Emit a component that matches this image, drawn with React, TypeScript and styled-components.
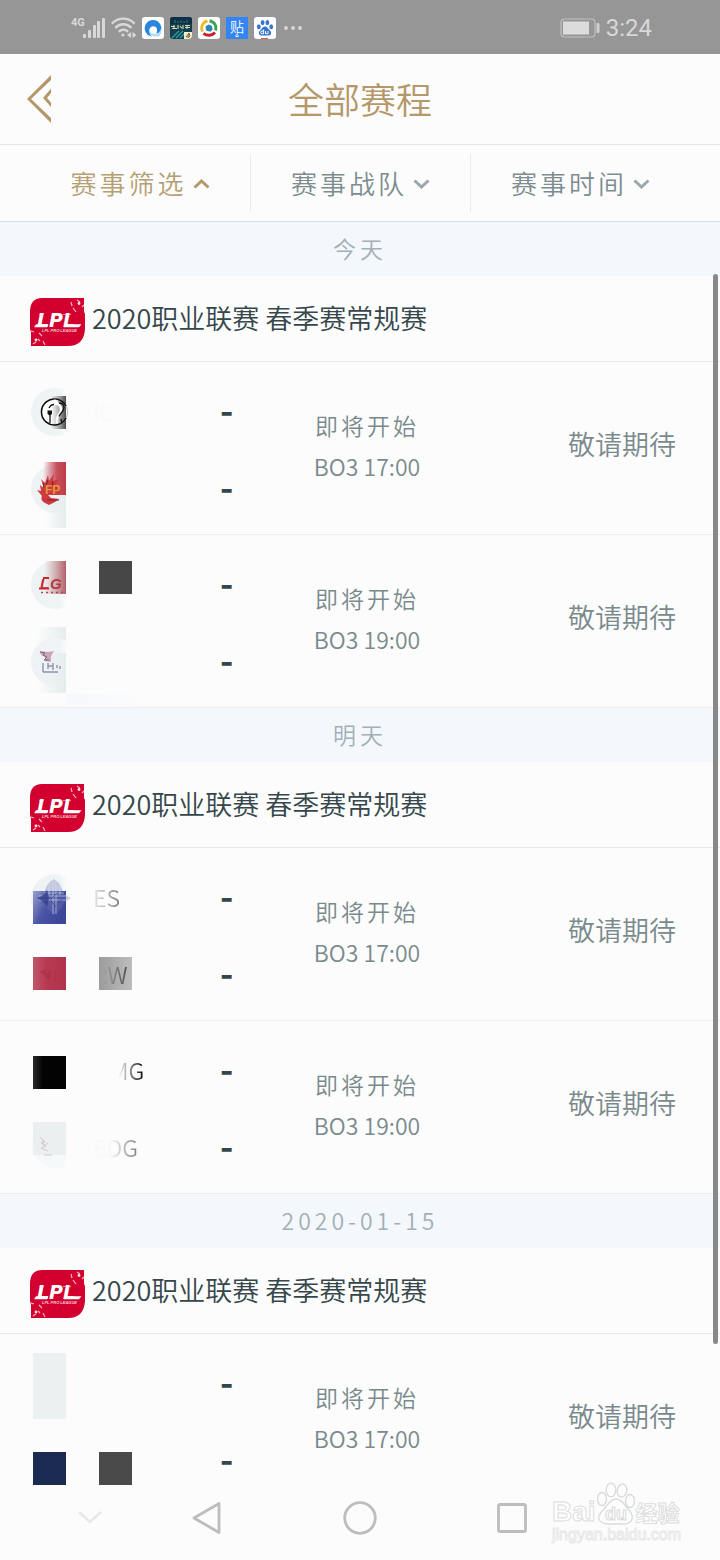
import React from "react";
import styled, { createGlobalStyle } from "styled-components";

const GlobalStyle = createGlobalStyle`
  *, *::before, *::after { box-sizing: border-box; }
  body {
    margin: 0;
    background: #fcfcfc;
    color: #35474b;
    font-family: "Noto Sans CJK SC", "Noto Sans", sans-serif;
    font-weight: 350;
  }
  button {
    margin: 0;
    padding: 0;
    border: 0;
    background: none;
    font: inherit;
    color: inherit;
    cursor: pointer;
  }
  svg { display: block; }
`;

const Screen = styled.div`
  position: relative;
  display: flex;
  flex-direction: column;
  height: 100vh;
  background: #fcfcfc;
`;

/* ---------- status bar ---------- */

const StatusBar = styled.div`
  flex: none;
  display: flex;
  align-items: center;
  justify-content: space-between;
  height: 54px;
  padding: 2px 68px 0 71px;
  background: #969696;
  color: #d8d8d8;
`;

const StatusGroup = styled.div<{ $gap: number }>`
  display: flex;
  align-items: center;
  gap: ${(p) => p.$gap}px;
`;

const Clock = styled.span`
  font-family: Roboto, sans-serif;
  font-size: 24px;
  line-height: 28px;
  font-weight: 400;
`;

const SignalIcon = () => (
  <svg width="34" height="24" viewBox="0 0 34 24">
    <text x="0" y="10" fontFamily="Roboto, sans-serif" fontSize="11" fontWeight="700" fill="#d8d8d8">
      4G
    </text>
    <g fill="#d8d8d8">
      <rect x="12" y="18" width="3" height="4" rx="1" />
      <rect x="17" y="14" width="3" height="8" rx="1" />
      <rect x="22" y="9" width="3" height="13" rx="1" />
      <rect x="26" y="5" width="3" height="17" rx="1" />
      <rect x="31" y="2" width="3" height="20" rx="1" />
    </g>
  </svg>
);

const WifiIcon = () => (
  <svg width="25" height="24" viewBox="0 0 25 24" fill="none" stroke="#d8d8d8" strokeWidth="2.4">
    <path d="M0.8 7.6C7.5 1 17 1 23.6 7.6" />
    <path d="M4.2 11.8c4.8-4.8 11.4-4.8 16.2 0" />
    <path d="M7.8 15.8c2.8-2.7 6.4-2.7 9.2 0" />
    <circle cx="12" cy="19" r="1.6" fill="#d8d8d8" stroke="none" />
    <path d="M20 16v6l-4-3zM21.500 16v6l4-3z" fill="#d8d8d8" stroke="none" />
  </svg>
);

const BrowserIcon = () => (
  <svg width="22" height="22" viewBox="0 0 22 22">
    <rect width="22" height="22" rx="3" fill="#fff" />
    <path d="M5 17A8.300 8.300 0 1 1 19 13.500C18.500 16.500 16 17.500 14.500 16 16 12 14.500 9.500 11.500 9.300 8.500 9.300 6.500 12 7.500 15.500 8 17.500 9 18.700 10 19.400 8 19.200 6 18.300 5 17z" fill="#2a86dc" />
    <path d="M7.300 14C7.500 17 9.500 19.300 12.500 19.500H17c2-2 3-5 2-8-.8 3.500-2.500 5-5.500 5.200s-5-1-6.200-2.700z" fill="#b5defa" />
  </svg>
);

const GameIcon = () => (
  <svg width="22" height="22" viewBox="0 0 22 22">
    <rect width="22" height="22" rx="3" fill="#124050" />
    <path d="M0 3a3 3 0 0 1 3-3h16a3 3 0 0 1 3 3v4H0z" fill="#0c3145" />
    <path d="M5 3v3M8 4v2M11 3v3M14 4v2M17 3v3" stroke="#2c7186" strokeWidth="1.200" />
    <path d="M1 9.500h4M2 11.500h5M4 8v4M8 8v4M10 9l2 2.500M13 8v4M15 8.500h5M15 10.500h5M17 8v4" stroke="#d9d8a4" strokeWidth="1.100" />
    <path d="M2 21l7-7M6 21l7-7M10 21l5-5" stroke="#2e9fa5" strokeWidth="1.300" />
    <path d="M14 15h8v4a3 3 0 0 1-3 3h-5z" fill="#f0efd6" />
    <path d="M16 20l3-4 1 3-2 2" fill="#c89a1e" stroke="#444" strokeWidth=".7" />
  </svg>
);

const VideoIcon = () => (
  <svg width="22" height="22" viewBox="0 0 22 22" fill="none">
    <rect width="22" height="22" rx="3" fill="#fff" />
    <path d="M4.500 14.500A7.200 7.200 0 0 1 9.500 4" stroke="#f0b92a" strokeWidth="2.800" />
    <path d="M11.500 4a7 7 0 0 1 6 9.500" stroke="#3fa450" strokeWidth="2.800" />
    <path d="M17 15.500c-3 3.500-8 3.500-11.500 1" stroke="#c3242c" strokeWidth="2.800" />
    <path d="M8 13.500l-.500-4 3-2 3.500 1.500.500 3.500-2 2.200z" fill="#2a86b8" />
  </svg>
);

const TiebaIcon = () => (
  <svg width="22" height="22" viewBox="0 0 22 22">
    <rect width="22" height="22" fill="#3385f5" />
    <text x="4" y="15" fontFamily="Noto Sans CJK SC, sans-serif" fontSize="14" fill="#fff">
      贴
    </text>
    <path d="M9.500 19.500h3M9.500 18.500l1.500-1 1.500 1" stroke="#fff" fill="none" />
  </svg>
);

const PawIcon = () => (
  <svg width="22" height="22" viewBox="0 0 22 22">
    <rect width="22" height="22" rx="3" fill="#fff" />
    <g fill="#3a72cf">
      <ellipse cx="4.800" cy="9.700" rx="1.900" ry="2.500" />
      <ellipse cx="8.600" cy="5.600" rx="1.900" ry="2.600" />
      <ellipse cx="13.400" cy="5.600" rx="1.900" ry="2.600" />
      <ellipse cx="17.200" cy="9.700" rx="1.900" ry="2.500" />
      <path d="M11 9.500c2 0 2.800 1.800 4 3 1.500 1.300 2.600 2.500 2 4.300-.700 2-2.600 1.700-6 1.700s-5.300.300-6-1.700c-.600-1.800.500-3 2-4.300 1.200-1.200 2-3 4-3z" />
    </g>
    <path d="M9.600 12.500v4.200H8a1.300 1.300 0 0 1 0-2.700h1.600M11.500 14v2.700h2.500V14" stroke="#fff" fill="none" />
    <path d="M7 21.500h7" stroke="#e0564e" />
  </svg>
);

const MoreIcon = () => (
  <svg width="21" height="4" viewBox="-3 0 21 4" fill="#d8d8d8">
    <circle cx="1" cy="2" r="1.900" />
    <circle cx="8" cy="2" r="1.900" />
    <circle cx="15" cy="2" r="1.900" />
  </svg>
);

const BatteryIcon = () => (
  <svg width="40" height="20" viewBox="0 0 40 20">
    <rect x="1" y="1" width="34" height="18" rx="3.500" fill="none" stroke="#c0c0c0" strokeWidth="1.200" />
    <rect x="3" y="3.500" width="26" height="13" fill="#dcdcdc" />
    <rect x="36.500" y="5" width="3" height="10" rx="1" fill="#d0d0d0" />
  </svg>
);

/* ---------- title and filters ---------- */

const TitleBar = styled.header`
  flex: none;
  display: grid;
  grid-template-columns: 1fr auto 1fr;
  align-items: center;
  height: 91px;
  padding: 0 27px;
  border-bottom: 1px solid #e2e4e6;
  color: #b5986a;
`;

const BackButton = styled.button`
  justify-self: start;
`;

const Title = styled.h1`
  margin: 0;
  padding-bottom: 2px;
  font-size: 36px;
  line-height: 52px;
  font-weight: 350;
`;

const Filters = styled.nav`
  flex: none;
  display: grid;
  grid-template-columns: repeat(3, 1fr);
  align-items: center;
  height: 77px;
  padding: 0 30px;
  border-bottom: 1px solid #dadfe4;
`;

const FilterButton = styled.button<{ $active?: boolean }>`
  && {
    display: flex;
    align-items: center;
    justify-content: center;
    gap: 6px;
    height: 58px;
    padding-bottom: 2px;
    color: ${(p) => (p.$active ? "#b5a075" : "#7c8c8f")};
    font-size: 26px;
    letter-spacing: 3px;
  }
  & + & {
    border-left: 1px solid #e9ebec;
  }
`;

const Caret = ({ up }: { up?: boolean }) => (
  <svg width="17" height="14" viewBox="0 -3 17 14" fill="none" strokeWidth="3">
    {up ? (
      <path d="M1.500 9.500L8.500 3l7 6.500" stroke="#b5986a" />
    ) : (
      <path d="M1.500 2.500L8.500 9l7-6.500" stroke="#9aa8ab" />
    )}
  </svg>
);

/* ---------- schedule ---------- */

const ScheduleArea = styled.main`
  position: relative;
  flex: 1;
  min-height: 0;
`;

const ScrollList = styled.div`
  height: 100%;
  overflow-y: auto;
  scrollbar-width: none;
`;

const ScrollThumb = styled.div`
  position: absolute;
  top: 52px;
  bottom: 142px;
  right: 2px;
  width: 5px;
  border-radius: 3px;
  background: #888888;
`;

const DayLabel = styled.h2`
  margin: 0;
  height: 54px;
  background: #f4f7fc;
  color: #a3b0b6;
  font-size: 23px;
  line-height: 52px;
  font-weight: 350;
  letter-spacing: 4px;
  text-align: center;
`;

const League = styled.div`
  display: flex;
  align-items: center;
  gap: 7px;
  height: 86px;
  padding: 0 30px 2px;
  border-bottom: 1px solid #e6e8ea;
  font-size: 27px;
  line-height: 40px;
`;

const MatchRow = styled.div`
  display: grid;
  grid-template-columns: 252fr 230fr 238fr;
  align-items: center;
  height: 173px;
  padding: 11px 0 7px;
  border-bottom: 1px solid #eceeef;
  color: #7a8a8c;
`;

const Teams = styled.div`
  padding-left: 31px;
`;

const TeamLine = styled.div`
  display: grid;
  grid-template-columns: 189px auto;
  height: 77px;
`;

const TeamArt = styled.svg`
  grid-area: 1 / 1;
  overflow: visible;
`;

const TeamName = styled.span<{ $from: string; $to: string; $start: number }>`
  grid-area: 1 / 1;
  justify-self: start;
  z-index: 1;
  margin-left: 62px;
  font-size: 23px;
  line-height: 77px;
  color: transparent;
  background: linear-gradient(90deg, ${(p) => p.$from} ${(p) => p.$start}%, ${(p) => p.$to} 100%);
  background-clip: text;
  -webkit-background-clip: text;
`;

const Score = styled.span`
  grid-area: 1 / 2;
  color: #34464a;
  font-size: 36px;
  font-weight: 700;
  line-height: 70px;
`;

const MatchStatus = styled.div`
  padding-bottom: 8px;
  text-align: center;
  font-size: 23px;
  line-height: 41px;
`;

const Phase = styled.div`
  letter-spacing: 3px;
`;

const Result = styled.div`
  padding: 0 44px 12px 0;
  text-align: right;
  font-size: 27px;
  line-height: 40px;
`;

const LeagueLogo = () => (
  <svg width="55" height="56" viewBox="0 -8 55 56">
    <path
      d="M12 0H54V14Q55 15 55 17V31Q54 48 38 48H1V34Q0 32 0 30V14Q0 0 12 0z"
      fill="#d3002f"
    />
    <path
      d="M41 4l1 4M43 10l3 4M47 2l3 2M52 9l2-2M1 33l3 1M9 35l3 3M13 43l2 4M3 46l3-2M8 41l2 2"
      stroke="#f6b5c3"
      strokeWidth="1.200"
    />
    <circle cx="49" cy="5.500" r="1.400" fill="#fbe3e8" />
    <circle cx="6" cy="42" r="1.400" fill="#fbe3e8" />
    <text x="7" y="29" fontFamily="DejaVu Sans, sans-serif" fontSize="19" fontWeight="700" fontStyle="italic" fill="#fff">
      LPL
    </text>
    <path d="M9 16.500h5M4.500 29l1.500-2.500h12L17 29zM33 16.500h8M34 29l1-2.500h16L49 29z" fill="#fff" stroke="#fff" strokeWidth=".5" />
    <text x="12" y="34" fontFamily="Liberation Sans, sans-serif" fontSize="4" fontWeight="700" fontStyle="italic" fill="#f9ccd5">
      LPL PRO LEAGUE
    </text>
  </svg>
);

const Halo = () => <circle cx="24" cy="39" r="24" fill="url(#halo)" />;

const ArtDefs = () => (
  <svg width="0" height="0" aria-hidden="true">
    <defs>
      <linearGradient id="halo">
        <stop offset="0" stopColor="#edf2f4" />
        <stop offset=".6" stopColor="#f0f4f5" />
        <stop offset=".76" stopColor="#fcfcfc" />
      </linearGradient>
      <linearGradient id="igShade">
        <stop offset="0" stopColor="#777" stopOpacity="0" />
        <stop offset="1" stopColor="#4c4c4c" />
      </linearGradient>
      <linearGradient id="redShade">
        <stop offset="0" stopColor="#c8424e" stopOpacity="0" />
        <stop offset=".6" stopColor="#c6515c" />
        <stop offset="1" stopColor="#bf3c48" />
      </linearGradient>
      <linearGradient id="roseShade">
        <stop offset="0" stopColor="#b98085" stopOpacity="0" />
        <stop offset="1" stopColor="#b15f66" />
      </linearGradient>
      <linearGradient id="mistShade">
        <stop offset="0" stopColor="#e7edec" stopOpacity="0" />
        <stop offset="1" stopColor="#e6ecec" />
      </linearGradient>
      <linearGradient id="blueShade" x1="0" y1="0" x2="1" y2=".5">
        <stop offset="0" stopColor="#9aa0ce" />
        <stop offset=".5" stopColor="#4a55a5" />
        <stop offset="1" stopColor="#3c4797" />
      </linearGradient>
      <linearGradient id="crimson">
        <stop offset="0" stopColor="#c0566b" />
        <stop offset=".4" stopColor="#b83a52" />
        <stop offset="1" stopColor="#b0334c" />
      </linearGradient>
      <linearGradient id="greyShade">
        <stop offset="0" stopColor="#9c9c9c" />
        <stop offset="1" stopColor="#bdbdbd" />
      </linearGradient>
      <linearGradient id="blackShade">
        <stop offset="0" stopColor="#2a2a2a" />
        <stop offset=".3" stopColor="#030303" />
      </linearGradient>
      <linearGradient id="skyShade">
        <stop offset="0" stopColor="#f5f8fd" />
        <stop offset="1" stopColor="#f5f8fd" stopOpacity="0" />
      </linearGradient>
    </defs>
  </svg>
);

const art: Record<string, React.ReactNode> = {
  ig: (
    <>
      <Halo />
      <circle cx="23.500" cy="39" r="13" fill="#fff" />
      <rect x="20" y="23" width="15" height="33" fill="url(#igShade)" />
      <circle cx="23.500" cy="39" r="13" fill="none" stroke="#c5c8ca" strokeWidth="1.200" />
      <path d="M35 33A13 13 0 1 0 35 45" fill="none" stroke="#0b0b0b" strokeWidth="1.500" />
      <path d="M17.500 36c1-3 4-5.500 6.500-5.500 4 0 6 3 6 6 0 4-4 6-4 10v4" stroke="#fff" strokeWidth="2.500" fill="none" />
      <circle cx="24" cy="29.500" r="3" fill="#fff" />
      <path d="M16.500 37.500h4.500v3l-2 3-2.500-3z" fill="#111" />
      <path d="M19 43v7M18 35c1-2 3-3.500 5-3.500M28 30c4 0 6 3 4.500 6.500-1 3-3.500 4-4.500 7M30 46l1 4" stroke="#111" strokeWidth="1.300" fill="none" />
    </>
  ),
  fpx: (
    <>
      <Halo />
      <rect x="12" y="12" width="23" height="33" fill="url(#redShade)" />
      <rect x="14" y="45" width="21" height="33" fill="url(#mistShade)" />
      <path
        d="M14 53c-4-2-4-5-3-7l-5-6 4 1-1-6 4 3-3-9 4 4 3-8 1 6 5-7-1 7 6-2-3 6 4 3v7H17l3 3 8 1-4 3-6 3z"
        fill="#cf3a41"
      />
      <path d="M17 30l-2 6M12 33l1 5M22 31l-1 5M16 50h12" stroke="#7d2029" fill="none" />
      <text x="14" y="44" fontFamily="Liberation Sans, sans-serif" fontSize="12" fontWeight="700" fill="#e0983a">
        FP
      </text>
    </>
  ),
  lgd: (
    <>
      <Halo />
      <rect x="13" y="15" width="22" height="33" fill="url(#roseShade)" />
      <g fontFamily="Liberation Sans, sans-serif" fontSize="15" fontWeight="700" fontStyle="italic">
        <text x="9" y="43" fill="#c9262c">L</text>
        <text x="19" y="43" fill="#b23a42">G</text>
      </g>
      <path d="M12 32h6M8 42.500h10" stroke="#c9262c" strokeWidth="2" />
      <path d="M10 46.500h24" stroke="#a84a50" strokeDasharray="2 3" strokeWidth="1.500" />
      <rect x="68" y="15" width="33" height="33" fill="#474747" />
    </>
  ),
  pink: (
    <>
      <rect x="5" y="4" width="30" height="66" fill="url(#mistShade)" />
      <Halo />
      <rect x="14" y="30" width="21" height="34" fill="url(#mistShade)" />
      <path d="M9 28l8 1 6-1-3 5v6l-6-1v-4l-4-2z" fill="#c9a6ba" />
      <path d="M9 29l5 1-2 2 4 2-3 3h5" stroke="#80617f" fill="none" />
      <path d="M12 40v9M12 49h15M17 40v6M17 43h5M22 40v7M26 42v3M29 43v3" stroke="#8d93b0" strokeWidth="1.400" fill="none" />
      <rect x="36" y="71" width="84" height="11" fill="url(#skyShade)" />
    </>
  ),
  es: (
    <>
      <Halo />
      <rect x="2" y="32" width="33" height="33" fill="url(#blueShade)" />
      <path d="M23 20Q14 25 14 34Q10 36 6 39Q14 43 15 49Q20 52 23 56Q27 52 31 49Q32 43 40 39Q33 36 32 34Q31 25 23 20z" fill="#6e78b4" opacity=".35" />
      <path d="M22 21v34M25 21v34M18 24v12M29 24v12M8 37h29M8 41h29M13 34h20" stroke="#dde1f0" opacity=".55" fill="none" />
      <path d="M6 39q7-2 10-8l2 8-2 9Q13 42 6 39z" fill="#2f3a8a" opacity=".75" />
      <path d="M20 42l5 6M26 34l-6 6M27 44l4-4" stroke="#2f3a8a" opacity=".6" />
    </>
  ),
  rw: (
    <>
      <rect x="2" y="21" width="33" height="33" fill="url(#crimson)" />
      <path d="M8 36l8-3-2 4 6-2v6l-2 3-5-5zM23 34l3 4-3 4 3 4" fill="#a02a42" opacity=".45" />
      <rect x="68" y="21" width="33" height="33" fill="url(#greyShade)" />
    </>
  ),
  omg: <rect x="2" y="24" width="33" height="33" fill="url(#blackShade)" />,
  edg: (
    <>
      <path d="M2 28A24 24 0 0 0 35 57V28z" fill="#f5f9f9" />
      <rect x="2" y="13" width="33" height="33" fill="#eceff0" />
      <path d="M9 28l5 5-4 1 5 3-5 2 7 3M12 31l1 6 4-3M13 46h8" stroke="#d3c9cc" fill="none" />
    </>
  ),
  mist: <rect x="2" y="8" width="33" height="66" fill="#ecf0f1" />,
  navy: (
    <>
      <rect x="2" y="30" width="33" height="33" fill="#1b2a51" />
      <rect x="68" y="30" width="33" height="33" fill="#4a4a4a" />
    </>
  ),
};

interface TeamInfo {
  art: string;
  name?: string;
  from?: string;
  to?: string;
  start?: number;
}

interface MatchInfo {
  time: string;
  teams: [TeamInfo, TeamInfo];
}

const days: { label: string; matches: MatchInfo[] }[] = [
  {
    label: "今天",
    matches: [
      { time: "17:00", teams: [{ art: "ig", name: "IG", from: "#f8f9f9", to: "#fafafa" }, { art: "fpx" }] },
      { time: "19:00", teams: [{ art: "lgd" }, { art: "pink" }] },
    ],
  },
  {
    label: "明天",
    matches: [
      {
        time: "17:00",
        teams: [
          { art: "es", name: "ES", from: "#e8e8e8", to: "#808080" },
          { art: "rw", name: "RW", from: "transparent", to: "#484848", start: 30 },
        ],
      },
      {
        time: "19:00",
        teams: [
          { art: "omg", name: "OMG", from: "#fcfcfc", to: "#000000", start: 50 },
          { art: "edg", name: "EDG", from: "#f9f9f9", to: "#808080", start: 38 },
        ],
      },
    ],
  },
  {
    label: "2020-01-15",
    matches: [{ time: "17:00", teams: [{ art: "mist" }, { art: "navy" }] }],
  },
];

const Team = ({ team }: { team: TeamInfo }) => (
  <TeamLine>
    <TeamArt width="110" height="77" viewBox="0 0 110 77">
      {art[team.art]}
    </TeamArt>
    {team.name && (
      <TeamName $from={team.from ?? "#cccccc"} $to={team.to ?? "#888888"} $start={team.start ?? 0}>
        {team.name}
      </TeamName>
    )}
    <Score>-</Score>
  </TeamLine>
);

const Match = ({ match }: { match: MatchInfo }) => (
  <MatchRow>
    <Teams>
      <Team team={match.teams[0]} />
      <Team team={match.teams[1]} />
    </Teams>
    <MatchStatus>
      <Phase>即将开始</Phase>
      <div>BO3 {match.time}</div>
    </MatchStatus>
    <Result>敬请期待</Result>
  </MatchRow>
);

/* ---------- system navigation ---------- */

const SystemNav = styled.footer`
  flex: none;
  display: grid;
  grid-template-columns: 1fr auto 1fr;
  align-items: center;
  height: 74px;
  padding-bottom: 10px;
`;

const HideButton = styled.button`
  justify-self: start;
  && { margin-left: 78px; }
`;

const NavButtons = styled.div`
  display: flex;
  gap: 118px;
`;

const Watermark = styled.div`
  position: absolute;
  right: 38px;
  bottom: 16px;
  width: 130px;
  color: #ffffff;
  font-weight: 700;
  white-space: nowrap;
`;

const WatermarkTop = styled.div`
  display: flex;
  align-items: flex-end;
  -webkit-text-stroke: 1px #dcdddd;
`;

const Latin = styled.span`
  font-family: "Liberation Sans", sans-serif;
  font-size: 28px;
  line-height: 28px;
`;

const Hanzi = styled.span`
  font-size: 22px;
  line-height: 30px;
`;

const Site = styled.div`
  font-family: "Liberation Sans", sans-serif;
  font-size: 16px;
  line-height: 18px;
  font-weight: 400;
  -webkit-text-stroke: 1px #e8e8e8;
`;

const PawMark = () => (
  <svg width="40" height="44" viewBox="0 0 40 44" fill="#fdfdfd" stroke="#d9dada" strokeWidth="1.300">
    <ellipse cx="6" cy="17" rx="4.500" ry="6.500" />
    <ellipse cx="15" cy="8" rx="4.800" ry="6.800" />
    <ellipse cx="26" cy="8.500" rx="4.800" ry="6.500" transform="rotate(12 26 8.500)" />
    <ellipse cx="34" cy="19" rx="4.500" ry="6.500" />
    <path d="M20 17c6 0 8 6 12 10s5 7 4 10-4 5-8 5H12c-4 0-8-2-9-5s1-6 5-10 6-10 12-10z" />
    <text x="9" y="38" fontFamily="Liberation Sans, sans-serif" fontSize="18" fontWeight="700" strokeWidth="1">
      du
    </text>
  </svg>
);

export default function App() {
  return (
    <>
      <GlobalStyle />
      <Screen>
        <StatusBar>
          <StatusGroup $gap={6}>
            <SignalIcon />
            <WifiIcon />
            <BrowserIcon />
            <GameIcon />
            <VideoIcon />
            <TiebaIcon />
            <PawIcon />
            <MoreIcon />
          </StatusGroup>
          <StatusGroup $gap={6}>
            <BatteryIcon />
            <Clock>3:24</Clock>
          </StatusGroup>
        </StatusBar>

        <TitleBar>
          <BackButton aria-label="返回">
            <svg width="25" height="48" viewBox="0 0 25 48" fill="#b5986a">
              <path d="M24 0v5L4 24l20 19v5L0 24z" />
              <path d="M24 13.500v4.500l-4 5 4 4.500V32l-8-9z" />
            </svg>
          </BackButton>
          <Title>全部赛程</Title>
        </TitleBar>

        <Filters>
          <FilterButton $active>
            赛事筛选
            <Caret up />
          </FilterButton>
          <FilterButton>
            赛事战队
            <Caret />
          </FilterButton>
          <FilterButton>
            赛事时间
            <Caret />
          </FilterButton>
        </Filters>

        <ScheduleArea>
          <ScrollList>
            {days.map((day) => (
              <section key={day.label}>
                <DayLabel>{day.label}</DayLabel>
                <League>
                  <LeagueLogo />
                  2020职业联赛 春季赛常规赛
                </League>
                {day.matches.map((match) => (
                  <Match key={match.time} match={match} />
                ))}
              </section>
            ))}
            <ArtDefs />
          </ScrollList>
          <ScrollThumb />
        </ScheduleArea>

        <SystemNav>
          <HideButton aria-label="隐藏导航栏">
            <svg width="24" height="14" viewBox="0 0 24 14" fill="none" stroke="#e8e8e8" strokeWidth="2.500">
              <path d="M1 1l11 10L23 1" />
            </svg>
          </HideButton>
          <NavButtons>
            <button aria-label="后退">
              <svg width="34" height="34" viewBox="0 0 34 34" fill="none" stroke="#bdbdbd" strokeWidth="2.800" strokeLinejoin="round">
                <path d="M28 2.500v29L3 17z" />
              </svg>
            </button>
            <button aria-label="主页">
              <svg width="34" height="34" viewBox="0 0 34 34" fill="none" stroke="#bdbdbd" strokeWidth="2.800">
                <circle cx="17" cy="17" r="15.300" />
              </svg>
            </button>
            <button aria-label="最近任务">
              <svg width="34" height="34" viewBox="0 0 34 34" fill="none" stroke="#bdbdbd" strokeWidth="2.800">
                <rect x="3.500" y="3.500" width="27" height="27" rx="1.500" />
              </svg>
            </button>
          </NavButtons>
        </SystemNav>

        <Watermark>
          <WatermarkTop>
            <Latin>Bai</Latin>
            <PawMark />
            <Hanzi>经验</Hanzi>
          </WatermarkTop>
          <Site>jingyan.baidu.com</Site>
        </Watermark>
      </Screen>
    </>
  );
}
